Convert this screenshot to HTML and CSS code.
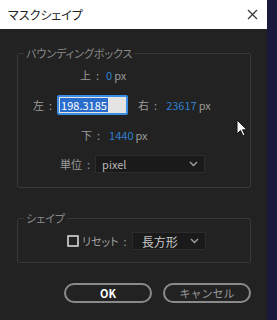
FILE: index.html
```html
<!DOCTYPE html>
<html>
    <head>
        <link rel="stylesheet" href="styles.css">
    </head>
    <body>
        <div class="screen">
            <div class="dialog">
                <div class="titlebar">
                    <span class="title">マスクシェイプ</span>
                    <svg class="close" width="11" height="11" viewBox="0 0 11 11">
                        <path d="M1 1 L10 10 M10 1 L1 10" stroke="#3a3a3a" stroke-width="1.3" fill="none"/>
                    </svg>
                </div>
                <div class="content">
                    <fieldset class="group box-group">
                        <legend>バウンディングボックス</legend>
                        <div class="row row-top">
                            <span class="lbl">上</span><span class="colon">:</span><span class="val">0</span><span class="unit">px</span>
                        </div>
                        <div class="row row-mid">
                            <span class="lbl">左</span><span class="colon">:</span>
                            <div class="field"><span class="sel">198.3185</span></div>
                            <span class="lbl right">右</span><span class="colon">:</span><span class="val">23617</span><span class="unit">px</span>
                        </div>
                        <div class="row row-bottom">
                            <span class="lbl">下</span><span class="colon">:</span><span class="val">1440</span><span class="unit">px</span>
                        </div>
                        <div class="row row-unit">
                            <span class="lbl">単位</span><span class="colon">:</span>
                            <div class="select unit-select">
                                <span>pixel</span>
                                <svg width="9" height="6" viewBox="0 0 9 6"><path d="M1 1 L4.5 4.5 L8 1" stroke="#a0a0a0" stroke-width="1.4" fill="none"/></svg>
                            </div>
                        </div>
                    </fieldset>
                    <fieldset class="group shape-group">
                        <legend>シェイプ</legend>
                        <div class="row row-reset">
                            <span class="check"></span>
                            <span class="lbl">リセット</span><span class="colon">:</span>
                            <div class="select shape-select">
                                <span>長方形</span>
                                <svg width="9" height="6" viewBox="0 0 9 6"><path d="M1 1 L4.5 4.5 L8 1" stroke="#a0a0a0" stroke-width="1.4" fill="none"/></svg>
                            </div>
                        </div>
                    </fieldset>
                    <div class="buttons">
                        <button class="btn ok">OK</button>
                        <button class="btn cancel">キャンセル</button>
                    </div>
                </div>
            </div>
            <div class="strip"></div>
            <svg class="cursor" width="12" height="19" viewBox="0 0 12 19">
                <path d="M1 1 L1 15 L4.5 11.5 L7 17 L9 16 L6.6 10.8 L11 10.8 Z" fill="#f4f4f4" stroke="#111" stroke-width="1"/>
            </svg>
        </div>
    </body>
</html>
```

FILE: styles.css
```css
html, body {
    margin: 0;
    padding: 0;
}
body {
    width: 277px;
    height: 320px;
    overflow: hidden;
    font-family: "Noto Sans CJK JP", "Noto Sans", sans-serif;
    font-feature-settings: "palt";
    font-size: 11px;
    color: #9a9a9a;
}
.screen {
    display: flex;
    height: 320px;
    position: relative;
}
.dialog {
    width: 267px;
    display: flex;
    flex-direction: column;
    background: #222222;
}
.strip {
    flex: 1;
    background: #19193d;
}
.titlebar {
    height: 29px;
    background: #ffffff;
    display: flex;
    align-items: center;
    justify-content: space-between;
    padding: 0 9px 0 8px;
    box-sizing: border-box;
}
.title {
    color: #222;
    font-size: 12px;
}
.content {
    padding-top: 17px;
}
.group {
    margin: 0 16px 0 17px;
    border: 1px solid #383838;
    border-radius: 2px;
    padding: 0;
}
.group legend {
    margin-left: 6px;
    padding: 0 2px;
    line-height: 14px;
    color: #8a8a8a;
}
.box-group {
    padding: 7px 0 14px 0;
}
.row {
    display: flex;
    align-items: center;
    white-space: nowrap;
}
.colon {
    margin: 0 5px;
}
.val {
    color: #2f7fd0;
    margin-left: 2px;
}
.unit {
    margin-left: 2px;
}
.row-top {
    height: 16px;
    padding-left: 62px;
}
.row-mid {
    height: 20px;
    margin-top: 12px;
    padding-left: 15px;
}
.row-bottom {
    height: 16px;
    margin-top: 12px;
    padding-left: 63px;
}
.row-bottom .colon {
    margin-right: 7px;
}
.row-unit {
    height: 18px;
    margin-top: 12px;
    padding-left: 42px;
}
.field {
    width: 71px;
    height: 20px;
    box-sizing: border-box;
    border: 2px solid #3b8de4;
    border-radius: 2px;
    background: #e4e4e4;
    display: flex;
    align-items: center;
    padding-left: 1px;
}
.sel {
    background: #2a6ccc;
    color: #ffffff;
    line-height: 14px;
    padding: 0 1px;
}
.lbl.right {
    margin-left: 10px;
}
.row-mid .val {
    margin-left: 4px;
}
.select {
    height: 18px;
    box-sizing: border-box;
    background: #1a1a1a;
    border: 1px solid #2c2c2c;
    display: flex;
    align-items: center;
    justify-content: space-between;
    color: #b8b8b8;
}
.unit-select {
    width: 110px;
    padding: 0 6px 0 6px;
}
.shape-group {
    margin-top: 23px;
    padding: 7px 0 12px 0;
}
.row-reset {
    height: 18px;
    padding-left: 49px;
}
.check {
    width: 12px;
    height: 12px;
    box-sizing: border-box;
    border: 2px solid #b4b4b4;
    border-radius: 1px;
    margin-right: 3px;
}
.row-reset .lbl {
    color: #a0a0a0;
}
.shape-select {
    width: 74px;
    padding: 0 6px 0 9px;
    font-size: 12px;
    color: #c8c8c8;
}
.buttons {
    display: flex;
    justify-content: flex-end;
    gap: 11px;
    margin: 20px 16px 0 0;
}
.btn {
    width: 88px;
    height: 20px;
    border: 2px solid #8a8a8a;
    border-radius: 10px;
    background: #222222;
    font-family: inherit;
    font-size: 11px;
    padding: 0;
}
.ok {
    color: #ffffff;
    font-weight: bold;
}
.cancel {
    color: #9a9a9a;
}
.cursor {
    position: absolute;
    left: 236px;
    top: 119px;
}
```
